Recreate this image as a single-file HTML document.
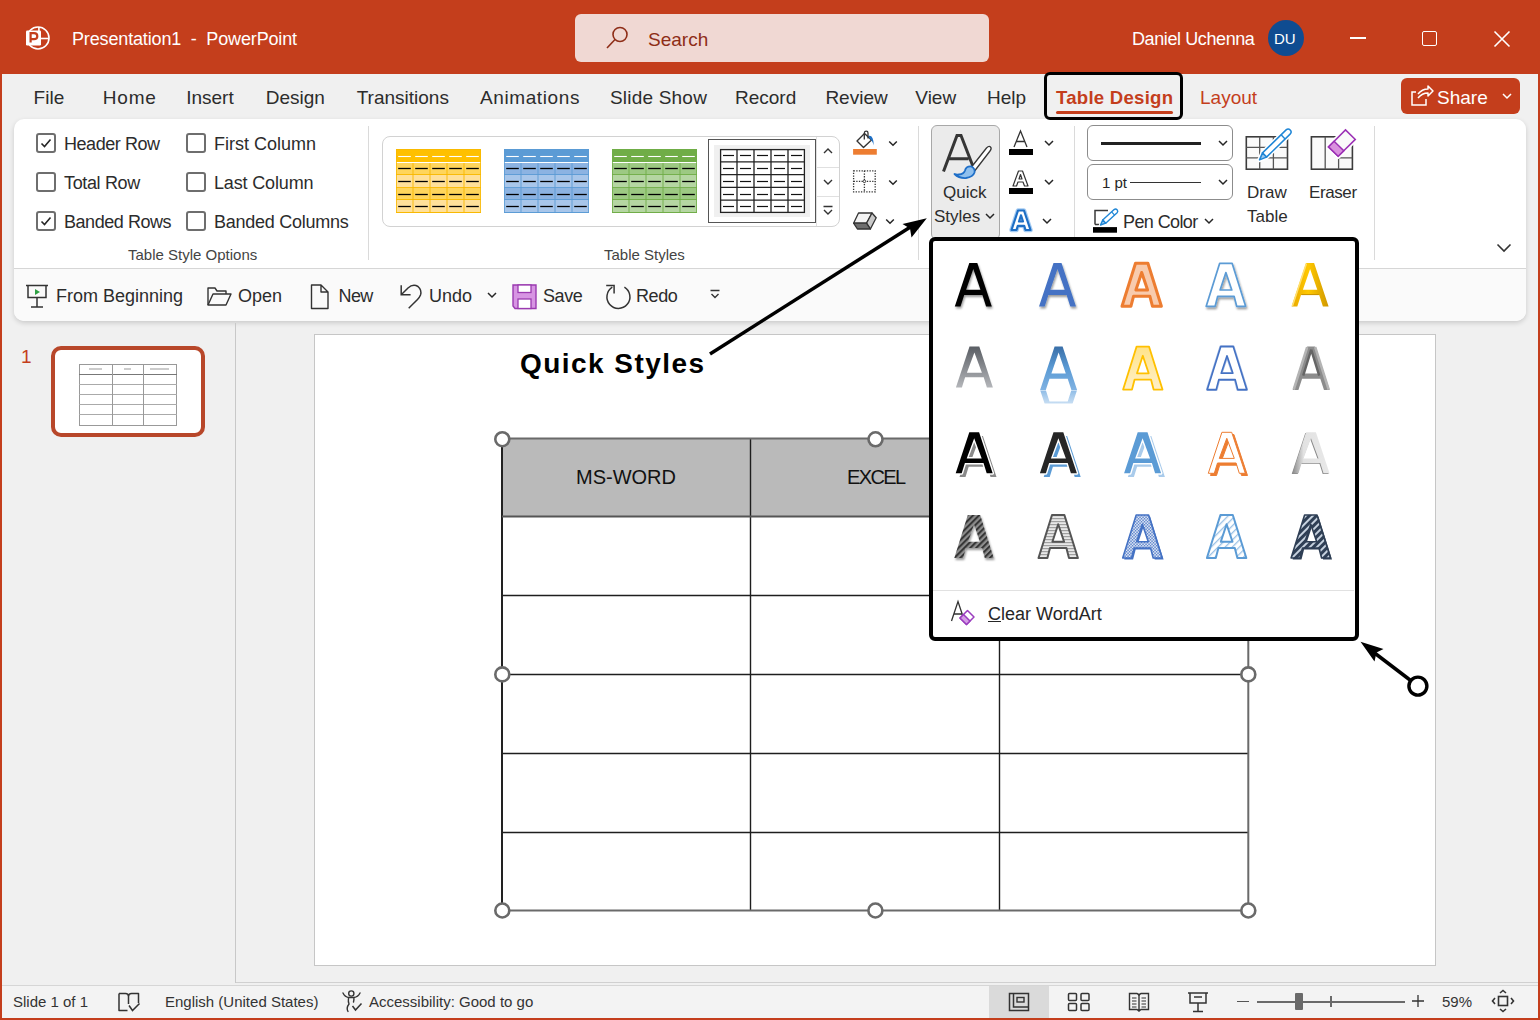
<!DOCTYPE html>
<html><head><meta charset="utf-8">
<style>
*{margin:0;padding:0;box-sizing:border-box}
html,body{width:1540px;height:1020px;overflow:hidden;background:#C43E1C;font-family:"Liberation Sans",sans-serif;color:#2c2c2c}
.a{position:absolute}
.t{position:absolute;white-space:nowrap;line-height:1}
svg{position:absolute;overflow:visible}
</style></head><body>
<!-- TITLE BAR -->
<div class="a" style="left:0;top:0;width:1540px;height:74px;background:#C43E1C"></div>
<svg style="left:20px;top:20px" width="36" height="36" viewBox="0 0 36 36">
  <circle cx="18" cy="18" r="11" fill="none" stroke="#fff" stroke-width="1.6"/>
  <line x1="18.9" y1="7" x2="18.9" y2="11" stroke="#fff" stroke-width="1.6"/>
  <line x1="20" y1="18.5" x2="29" y2="18.5" stroke="#fff" stroke-width="1.6"/>
  <rect x="6" y="10.6" width="15" height="14.8" rx="1.2" fill="#fff"/>
  <path d="M10.6 22.6 L10.6 13.2 L14 13.2 Q17.3 13.2 17.3 16.2 Q17.3 19.2 14 19.2 L10.6 19.2" fill="none" stroke="#C43E1C" stroke-width="2.2"/>
</svg>
<div class="t" style="left:72px;top:30px;font-size:18px;color:#fff;letter-spacing:-0.15px">Presentation1&nbsp; -&nbsp; PowerPoint</div>
<div class="a" style="left:575px;top:14px;width:414px;height:48px;background:#F0D8D3;border-radius:6px"></div>
<svg style="left:600px;top:24px" width="30" height="30" viewBox="0 0 30 30">
  <circle cx="20" cy="10.5" r="7" fill="none" stroke="#8E2D17" stroke-width="1.6"/>
  <line x1="15" y1="15.5" x2="7" y2="24" stroke="#8E2D17" stroke-width="1.6"/>
</svg>
<div class="t" style="left:648px;top:30px;font-size:19px;color:#8E2D17">Search</div>
<div class="t" style="left:1132px;top:30px;font-size:18px;color:#fff;letter-spacing:-0.4px">Daniel Uchenna</div>
<div class="a" style="left:1268px;top:20px;width:36px;height:36px;border-radius:50%;background:#0F4C91"></div>
<div class="t" style="left:1274px;top:31px;font-size:15px;color:#fff">DU</div>
<div class="a" style="left:1350px;top:37px;width:16px;height:1.5px;background:#fff"></div>
<div class="a" style="left:1422px;top:31px;width:15px;height:15px;border:1.5px solid #fff;border-radius:2px"></div>
<svg style="left:1494px;top:31px" width="16" height="16" viewBox="0 0 16 16"><path d="M0.5 0.5L15.5 15.5M15.5 0.5L0.5 15.5" stroke="#fff" stroke-width="1.6"/></svg>

<!-- MAIN BG -->
<div class="a" style="left:2px;top:74px;width:1536px;height:944px;background:#F0F0F0"></div>

<!-- TABS -->
<div class="t" style="left:33.6px;top:88px;font-size:19px">File</div>
<div class="t" style="left:102.8px;top:88px;font-size:19px;letter-spacing:0.8px">Home</div>
<div class="t" style="left:186.2px;top:88px;font-size:19px">Insert</div>
<div class="t" style="left:265.8px;top:88px;font-size:19px">Design</div>
<div class="t" style="left:356.7px;top:88px;font-size:19px">Transitions</div>
<div class="t" style="left:480.0px;top:88px;font-size:19px;letter-spacing:0.6px">Animations</div>
<div class="t" style="left:610.0px;top:88px;font-size:19px;letter-spacing:0.2px">Slide Show</div>
<div class="t" style="left:735.0px;top:88px;font-size:19px">Record</div>
<div class="t" style="left:825.4px;top:88px;font-size:19px">Review</div>
<div class="t" style="left:915.3px;top:88px;font-size:19px">View</div>
<div class="t" style="left:987.0px;top:88px;font-size:19px">Help</div>
<div class="a" style="left:1044px;top:72px;width:139px;height:48px;border:3.7px solid #000;border-radius:6px;z-index:5"></div>
<div class="t" style="left:1056px;top:89px;font-size:18.6px;font-weight:bold;color:#C43E1C;letter-spacing:0.25px">Table Design</div>
<div class="a" style="left:1056px;top:111px;width:117px;height:3px;background:#C43E1C;border-radius:1.5px"></div>
<div class="t" style="left:1200px;top:88px;font-size:19px;color:#C43E1C">Layout</div>
<div class="a" style="left:1401px;top:78px;width:119px;height:36px;background:#C43E1C;border-radius:6px"></div>
<svg style="left:1410px;top:86px" width="24" height="20" viewBox="0 0 24 20">
 <path d="M8 8 Q12 3 18 3 L18 0 L23 5 L18 10 L18 7 Q12 7 8 12" fill="none" stroke="#fff" stroke-width="1.5" stroke-linejoin="round"/>
 <path d="M6 6 L2 6 L2 19 L16 19 L16 13" fill="none" stroke="#fff" stroke-width="1.5"/>
</svg>
<div class="t" style="left:1437px;top:88px;font-size:19px;color:#fff">Share</div>
<svg style="left:1502px;top:93px" width="10" height="6" viewBox="0 0 10 6"><path d="M1 1L5 5L9 1" fill="none" stroke="#fff" stroke-width="1.5"/></svg>



<!-- RIBBON CARD -->
<div class="a" style="left:14px;top:119px;width:1512px;height:202px;background:#fff;border-radius:10px;box-shadow:0 2px 5px rgba(0,0,0,0.16)"></div>
<div class="a" style="left:14px;top:268px;width:1512px;height:53px;background:#FAFAFA;border-top:1px solid #D6D6D6;border-radius:0 0 10px 10px"></div>
<!-- group separators -->
<div class="a" style="left:368px;top:126px;width:1px;height:134px;background:#DADADA"></div>
<div class="a" style="left:918px;top:126px;width:1px;height:134px;background:#DADADA"></div>
<div class="a" style="left:1074px;top:126px;width:1px;height:134px;background:#DADADA"></div>
<div class="a" style="left:1374px;top:126px;width:1px;height:134px;background:#DADADA"></div>
<!-- checkboxes -->
<div class="a" style="left:36px;top:133px;width:20px;height:20px;border:2px solid #6E6E6E;border-radius:3px"></div>
<svg style="left:36px;top:133px" width="20" height="20" viewBox="0 0 20 20"><path d="M5.5 10.5L8.5 13.5L14.5 6.5" fill="none" stroke="#262626" stroke-width="1.6"/></svg>
<div class="t" style="left:64px;top:135px;font-size:18px;letter-spacing:-0.45px">Header Row</div>
<div class="a" style="left:36px;top:172px;width:20px;height:20px;border:2px solid #6E6E6E;border-radius:3px"></div>
<div class="t" style="left:64px;top:174px;font-size:18px;letter-spacing:-0.35px">Total Row</div>
<div class="a" style="left:36px;top:211px;width:20px;height:20px;border:2px solid #6E6E6E;border-radius:3px"></div>
<svg style="left:36px;top:211px" width="20" height="20" viewBox="0 0 20 20"><path d="M5.5 10.5L8.5 13.5L14.5 6.5" fill="none" stroke="#262626" stroke-width="1.6"/></svg>
<div class="t" style="left:64px;top:213px;font-size:18px;letter-spacing:-0.45px">Banded Rows</div>
<div class="a" style="left:186px;top:133px;width:20px;height:20px;border:2px solid #6E6E6E;border-radius:3px"></div>
<div class="t" style="left:214px;top:135px;font-size:18px;letter-spacing:0px">First Column</div>
<div class="a" style="left:186px;top:172px;width:20px;height:20px;border:2px solid #6E6E6E;border-radius:3px"></div>
<div class="t" style="left:214px;top:174px;font-size:18px;letter-spacing:-0.15px">Last Column</div>
<div class="a" style="left:186px;top:211px;width:20px;height:20px;border:2px solid #6E6E6E;border-radius:3px"></div>
<div class="t" style="left:214px;top:213px;font-size:18px;letter-spacing:-0.25px">Banded Columns</div>
<div class="t" style="left:128px;top:247px;font-size:15px;color:#444">Table Style Options</div>
<div class="t" style="left:604px;top:247px;font-size:15px;color:#444">Table Styles</div>
<!-- gallery -->
<div class="a" style="left:382px;top:136px;width:458px;height:91px;border:1px solid #D2D2D2;border-radius:8px"></div>
<div class="a" style="left:816px;top:137px;width:1px;height:89px;background:#E0E0E0"></div>
<div class="a" style="left:817px;top:167px;width:22px;height:1px;background:#E0E0E0"></div>
<div class="a" style="left:817px;top:196px;width:22px;height:1px;background:#E0E0E0"></div>
<svg style="left:822px;top:147px" width="12" height="8" viewBox="0 0 12 8"><path d="M2 6L6 2L10 6" fill="none" stroke="#333" stroke-width="1.4"/></svg>
<svg style="left:822px;top:178px" width="12" height="8" viewBox="0 0 12 8"><path d="M2 2L6 6L10 2" fill="none" stroke="#333" stroke-width="1.4"/></svg>
<svg style="left:822px;top:205px" width="12" height="12" viewBox="0 0 12 12"><path d="M1.5 1.5H10.5M2 5L6 9L10 5" fill="none" stroke="#333" stroke-width="1.4"/></svg>
<div class="a" style="left:708px;top:139px;width:108px;height:84px;border:1px solid #555;background:#fff"></div>
<div class="a" style="left:714px;top:145px;width:96px;height:72px;background:#F0F0F0"></div>
<svg style="left:396px;top:149px" width="85" height="64" viewBox="0 0 85 64"><rect x="0" y="0" width="85" height="13" fill="#FFC000"/><rect x="0" y="13" width="85" height="13" fill="#FFD55C"/><line x1="0" y1="25.5" x2="85" y2="25.5" stroke="#F8B800" stroke-width="0.9"/><rect x="0" y="26" width="85" height="13" fill="#FFE09A"/><line x1="0" y1="38.5" x2="85" y2="38.5" stroke="#F8B800" stroke-width="0.9"/><rect x="0" y="39" width="85" height="12" fill="#FFD55C"/><line x1="0" y1="50.5" x2="85" y2="50.5" stroke="#F8B800" stroke-width="0.9"/><rect x="0" y="51" width="85" height="13" fill="#FFE09A"/><line x1="0" y1="63.5" x2="85" y2="63.5" stroke="#F8B800" stroke-width="0.9"/><line x1="17.0" y1="13" x2="17.0" y2="64" stroke="#F8B800" stroke-width="0.9"/><line x1="34.0" y1="13" x2="34.0" y2="64" stroke="#F8B800" stroke-width="0.9"/><line x1="51.0" y1="13" x2="51.0" y2="64" stroke="#F8B800" stroke-width="0.9"/><line x1="68.0" y1="13" x2="68.0" y2="64" stroke="#F8B800" stroke-width="0.9"/><line x1="0" y1="13.5" x2="85" y2="13.5" stroke="#fff" stroke-width="1"/><line x1="2.2" y1="7.5" x2="14.8" y2="7.5" stroke="#fff" stroke-width="1.1"/><line x1="19.2" y1="7.5" x2="31.8" y2="7.5" stroke="#fff" stroke-width="1.1"/><line x1="36.2" y1="7.5" x2="48.8" y2="7.5" stroke="#fff" stroke-width="1.1"/><line x1="53.2" y1="7.5" x2="65.8" y2="7.5" stroke="#fff" stroke-width="1.1"/><line x1="70.2" y1="7.5" x2="82.8" y2="7.5" stroke="#fff" stroke-width="1.1"/><line x1="2.2" y1="19.5" x2="14.8" y2="19.5" stroke="#000" stroke-width="1.3"/><line x1="19.2" y1="19.5" x2="31.8" y2="19.5" stroke="#000" stroke-width="1.3"/><line x1="36.2" y1="19.5" x2="48.8" y2="19.5" stroke="#000" stroke-width="1.3"/><line x1="53.2" y1="19.5" x2="65.8" y2="19.5" stroke="#000" stroke-width="1.3"/><line x1="70.2" y1="19.5" x2="82.8" y2="19.5" stroke="#000" stroke-width="1.3"/><line x1="2.2" y1="32.5" x2="14.8" y2="32.5" stroke="#000" stroke-width="1.3"/><line x1="19.2" y1="32.5" x2="31.8" y2="32.5" stroke="#000" stroke-width="1.3"/><line x1="36.2" y1="32.5" x2="48.8" y2="32.5" stroke="#000" stroke-width="1.3"/><line x1="53.2" y1="32.5" x2="65.8" y2="32.5" stroke="#000" stroke-width="1.3"/><line x1="70.2" y1="32.5" x2="82.8" y2="32.5" stroke="#000" stroke-width="1.3"/><line x1="2.2" y1="45.5" x2="14.8" y2="45.5" stroke="#000" stroke-width="1.3"/><line x1="19.2" y1="45.5" x2="31.8" y2="45.5" stroke="#000" stroke-width="1.3"/><line x1="36.2" y1="45.5" x2="48.8" y2="45.5" stroke="#000" stroke-width="1.3"/><line x1="53.2" y1="45.5" x2="65.8" y2="45.5" stroke="#000" stroke-width="1.3"/><line x1="70.2" y1="45.5" x2="82.8" y2="45.5" stroke="#000" stroke-width="1.3"/><line x1="2.2" y1="57.5" x2="14.8" y2="57.5" stroke="#000" stroke-width="1.3"/><line x1="19.2" y1="57.5" x2="31.8" y2="57.5" stroke="#000" stroke-width="1.3"/><line x1="36.2" y1="57.5" x2="48.8" y2="57.5" stroke="#000" stroke-width="1.3"/><line x1="53.2" y1="57.5" x2="65.8" y2="57.5" stroke="#000" stroke-width="1.3"/><line x1="70.2" y1="57.5" x2="82.8" y2="57.5" stroke="#000" stroke-width="1.3"/><rect x="0.4" y="0.4" width="84.2" height="63.2" fill="none" stroke="#F8B800" stroke-width="0.8"/></svg>
<svg style="left:504px;top:149px" width="85" height="64" viewBox="0 0 85 64"><rect x="0" y="0" width="85" height="13" fill="#5B9BD5"/><rect x="0" y="13" width="85" height="13" fill="#8CB3E2"/><line x1="0" y1="25.5" x2="85" y2="25.5" stroke="#5B9BD5" stroke-width="0.9"/><rect x="0" y="26" width="85" height="13" fill="#A8C6EA"/><line x1="0" y1="38.5" x2="85" y2="38.5" stroke="#5B9BD5" stroke-width="0.9"/><rect x="0" y="39" width="85" height="12" fill="#8CB3E2"/><line x1="0" y1="50.5" x2="85" y2="50.5" stroke="#5B9BD5" stroke-width="0.9"/><rect x="0" y="51" width="85" height="13" fill="#A8C6EA"/><line x1="0" y1="63.5" x2="85" y2="63.5" stroke="#5B9BD5" stroke-width="0.9"/><line x1="17.0" y1="13" x2="17.0" y2="64" stroke="#5B9BD5" stroke-width="0.9"/><line x1="34.0" y1="13" x2="34.0" y2="64" stroke="#5B9BD5" stroke-width="0.9"/><line x1="51.0" y1="13" x2="51.0" y2="64" stroke="#5B9BD5" stroke-width="0.9"/><line x1="68.0" y1="13" x2="68.0" y2="64" stroke="#5B9BD5" stroke-width="0.9"/><line x1="0" y1="13.5" x2="85" y2="13.5" stroke="#fff" stroke-width="1"/><line x1="2.2" y1="7.5" x2="14.8" y2="7.5" stroke="#fff" stroke-width="1.1"/><line x1="19.2" y1="7.5" x2="31.8" y2="7.5" stroke="#fff" stroke-width="1.1"/><line x1="36.2" y1="7.5" x2="48.8" y2="7.5" stroke="#fff" stroke-width="1.1"/><line x1="53.2" y1="7.5" x2="65.8" y2="7.5" stroke="#fff" stroke-width="1.1"/><line x1="70.2" y1="7.5" x2="82.8" y2="7.5" stroke="#fff" stroke-width="1.1"/><line x1="2.2" y1="19.5" x2="14.8" y2="19.5" stroke="#000" stroke-width="1.3"/><line x1="19.2" y1="19.5" x2="31.8" y2="19.5" stroke="#000" stroke-width="1.3"/><line x1="36.2" y1="19.5" x2="48.8" y2="19.5" stroke="#000" stroke-width="1.3"/><line x1="53.2" y1="19.5" x2="65.8" y2="19.5" stroke="#000" stroke-width="1.3"/><line x1="70.2" y1="19.5" x2="82.8" y2="19.5" stroke="#000" stroke-width="1.3"/><line x1="2.2" y1="32.5" x2="14.8" y2="32.5" stroke="#000" stroke-width="1.3"/><line x1="19.2" y1="32.5" x2="31.8" y2="32.5" stroke="#000" stroke-width="1.3"/><line x1="36.2" y1="32.5" x2="48.8" y2="32.5" stroke="#000" stroke-width="1.3"/><line x1="53.2" y1="32.5" x2="65.8" y2="32.5" stroke="#000" stroke-width="1.3"/><line x1="70.2" y1="32.5" x2="82.8" y2="32.5" stroke="#000" stroke-width="1.3"/><line x1="2.2" y1="45.5" x2="14.8" y2="45.5" stroke="#000" stroke-width="1.3"/><line x1="19.2" y1="45.5" x2="31.8" y2="45.5" stroke="#000" stroke-width="1.3"/><line x1="36.2" y1="45.5" x2="48.8" y2="45.5" stroke="#000" stroke-width="1.3"/><line x1="53.2" y1="45.5" x2="65.8" y2="45.5" stroke="#000" stroke-width="1.3"/><line x1="70.2" y1="45.5" x2="82.8" y2="45.5" stroke="#000" stroke-width="1.3"/><line x1="2.2" y1="57.5" x2="14.8" y2="57.5" stroke="#000" stroke-width="1.3"/><line x1="19.2" y1="57.5" x2="31.8" y2="57.5" stroke="#000" stroke-width="1.3"/><line x1="36.2" y1="57.5" x2="48.8" y2="57.5" stroke="#000" stroke-width="1.3"/><line x1="53.2" y1="57.5" x2="65.8" y2="57.5" stroke="#000" stroke-width="1.3"/><line x1="70.2" y1="57.5" x2="82.8" y2="57.5" stroke="#000" stroke-width="1.3"/><rect x="0.4" y="0.4" width="84.2" height="63.2" fill="none" stroke="#5B9BD5" stroke-width="0.8"/></svg>
<svg style="left:612px;top:149px" width="85" height="64" viewBox="0 0 85 64"><rect x="0" y="0" width="85" height="13" fill="#70AD47"/><rect x="0" y="13" width="85" height="13" fill="#9DC983"/><line x1="0" y1="25.5" x2="85" y2="25.5" stroke="#70AD47" stroke-width="0.9"/><rect x="0" y="26" width="85" height="13" fill="#B5D6A2"/><line x1="0" y1="38.5" x2="85" y2="38.5" stroke="#70AD47" stroke-width="0.9"/><rect x="0" y="39" width="85" height="12" fill="#9DC983"/><line x1="0" y1="50.5" x2="85" y2="50.5" stroke="#70AD47" stroke-width="0.9"/><rect x="0" y="51" width="85" height="13" fill="#B5D6A2"/><line x1="0" y1="63.5" x2="85" y2="63.5" stroke="#70AD47" stroke-width="0.9"/><line x1="17.0" y1="13" x2="17.0" y2="64" stroke="#70AD47" stroke-width="0.9"/><line x1="34.0" y1="13" x2="34.0" y2="64" stroke="#70AD47" stroke-width="0.9"/><line x1="51.0" y1="13" x2="51.0" y2="64" stroke="#70AD47" stroke-width="0.9"/><line x1="68.0" y1="13" x2="68.0" y2="64" stroke="#70AD47" stroke-width="0.9"/><line x1="0" y1="13.5" x2="85" y2="13.5" stroke="#fff" stroke-width="1"/><line x1="2.2" y1="7.5" x2="14.8" y2="7.5" stroke="#fff" stroke-width="1.1"/><line x1="19.2" y1="7.5" x2="31.8" y2="7.5" stroke="#fff" stroke-width="1.1"/><line x1="36.2" y1="7.5" x2="48.8" y2="7.5" stroke="#fff" stroke-width="1.1"/><line x1="53.2" y1="7.5" x2="65.8" y2="7.5" stroke="#fff" stroke-width="1.1"/><line x1="70.2" y1="7.5" x2="82.8" y2="7.5" stroke="#fff" stroke-width="1.1"/><line x1="2.2" y1="19.5" x2="14.8" y2="19.5" stroke="#000" stroke-width="1.3"/><line x1="19.2" y1="19.5" x2="31.8" y2="19.5" stroke="#000" stroke-width="1.3"/><line x1="36.2" y1="19.5" x2="48.8" y2="19.5" stroke="#000" stroke-width="1.3"/><line x1="53.2" y1="19.5" x2="65.8" y2="19.5" stroke="#000" stroke-width="1.3"/><line x1="70.2" y1="19.5" x2="82.8" y2="19.5" stroke="#000" stroke-width="1.3"/><line x1="2.2" y1="32.5" x2="14.8" y2="32.5" stroke="#000" stroke-width="1.3"/><line x1="19.2" y1="32.5" x2="31.8" y2="32.5" stroke="#000" stroke-width="1.3"/><line x1="36.2" y1="32.5" x2="48.8" y2="32.5" stroke="#000" stroke-width="1.3"/><line x1="53.2" y1="32.5" x2="65.8" y2="32.5" stroke="#000" stroke-width="1.3"/><line x1="70.2" y1="32.5" x2="82.8" y2="32.5" stroke="#000" stroke-width="1.3"/><line x1="2.2" y1="45.5" x2="14.8" y2="45.5" stroke="#000" stroke-width="1.3"/><line x1="19.2" y1="45.5" x2="31.8" y2="45.5" stroke="#000" stroke-width="1.3"/><line x1="36.2" y1="45.5" x2="48.8" y2="45.5" stroke="#000" stroke-width="1.3"/><line x1="53.2" y1="45.5" x2="65.8" y2="45.5" stroke="#000" stroke-width="1.3"/><line x1="70.2" y1="45.5" x2="82.8" y2="45.5" stroke="#000" stroke-width="1.3"/><line x1="2.2" y1="57.5" x2="14.8" y2="57.5" stroke="#000" stroke-width="1.3"/><line x1="19.2" y1="57.5" x2="31.8" y2="57.5" stroke="#000" stroke-width="1.3"/><line x1="36.2" y1="57.5" x2="48.8" y2="57.5" stroke="#000" stroke-width="1.3"/><line x1="53.2" y1="57.5" x2="65.8" y2="57.5" stroke="#000" stroke-width="1.3"/><line x1="70.2" y1="57.5" x2="82.8" y2="57.5" stroke="#000" stroke-width="1.3"/><rect x="0.4" y="0.4" width="84.2" height="63.2" fill="none" stroke="#70AD47" stroke-width="0.8"/></svg>
<svg style="left:720px;top:149px" width="85" height="64" viewBox="0 0 85 64"><rect x="0.6" y="0.6" width="83.8" height="62.8" fill="#fff" stroke="#222" stroke-width="1.3"/><line x1="0" y1="12.8" x2="85" y2="12.8" stroke="#222" stroke-width="1.3"/><line x1="0" y1="25.6" x2="85" y2="25.6" stroke="#222" stroke-width="1.3"/><line x1="0" y1="38.4" x2="85" y2="38.4" stroke="#222" stroke-width="1.3"/><line x1="0" y1="51.2" x2="85" y2="51.2" stroke="#222" stroke-width="1.3"/><line x1="17.0" y1="0" x2="17.0" y2="64" stroke="#222" stroke-width="1.3"/><line x1="34.0" y1="0" x2="34.0" y2="64" stroke="#222" stroke-width="1.3"/><line x1="51.0" y1="0" x2="51.0" y2="64" stroke="#222" stroke-width="1.3"/><line x1="68.0" y1="0" x2="68.0" y2="64" stroke="#222" stroke-width="1.3"/><line x1="3.0" y1="6.5" x2="14.0" y2="6.5" stroke="#111" stroke-width="1.2"/><line x1="20.0" y1="6.5" x2="31.0" y2="6.5" stroke="#111" stroke-width="1.2"/><line x1="37.0" y1="6.5" x2="48.0" y2="6.5" stroke="#111" stroke-width="1.2"/><line x1="54.0" y1="6.5" x2="65.0" y2="6.5" stroke="#111" stroke-width="1.2"/><line x1="71.0" y1="6.5" x2="82.0" y2="6.5" stroke="#111" stroke-width="1.2"/><line x1="3.0" y1="19.5" x2="14.0" y2="19.5" stroke="#111" stroke-width="1.2"/><line x1="20.0" y1="19.5" x2="31.0" y2="19.5" stroke="#111" stroke-width="1.2"/><line x1="37.0" y1="19.5" x2="48.0" y2="19.5" stroke="#111" stroke-width="1.2"/><line x1="54.0" y1="19.5" x2="65.0" y2="19.5" stroke="#111" stroke-width="1.2"/><line x1="71.0" y1="19.5" x2="82.0" y2="19.5" stroke="#111" stroke-width="1.2"/><line x1="3.0" y1="32.5" x2="14.0" y2="32.5" stroke="#111" stroke-width="1.2"/><line x1="20.0" y1="32.5" x2="31.0" y2="32.5" stroke="#111" stroke-width="1.2"/><line x1="37.0" y1="32.5" x2="48.0" y2="32.5" stroke="#111" stroke-width="1.2"/><line x1="54.0" y1="32.5" x2="65.0" y2="32.5" stroke="#111" stroke-width="1.2"/><line x1="71.0" y1="32.5" x2="82.0" y2="32.5" stroke="#111" stroke-width="1.2"/><line x1="3.0" y1="45.5" x2="14.0" y2="45.5" stroke="#111" stroke-width="1.2"/><line x1="20.0" y1="45.5" x2="31.0" y2="45.5" stroke="#111" stroke-width="1.2"/><line x1="37.0" y1="45.5" x2="48.0" y2="45.5" stroke="#111" stroke-width="1.2"/><line x1="54.0" y1="45.5" x2="65.0" y2="45.5" stroke="#111" stroke-width="1.2"/><line x1="71.0" y1="45.5" x2="82.0" y2="45.5" stroke="#111" stroke-width="1.2"/><line x1="3.0" y1="57.5" x2="14.0" y2="57.5" stroke="#111" stroke-width="1.2"/><line x1="20.0" y1="57.5" x2="31.0" y2="57.5" stroke="#111" stroke-width="1.2"/><line x1="37.0" y1="57.5" x2="48.0" y2="57.5" stroke="#111" stroke-width="1.2"/><line x1="54.0" y1="57.5" x2="65.0" y2="57.5" stroke="#111" stroke-width="1.2"/><line x1="71.0" y1="57.5" x2="82.0" y2="57.5" stroke="#111" stroke-width="1.2"/></svg>
<!-- shading/borders/eraser -->
<svg style="left:845px;top:125px" width="60" height="110" viewBox="0 0 60 110">
 <path d="M12,16 L19.5,8.5 L26.5,15 L18.5,22.5 Z" fill="#fff" stroke="#333" stroke-width="1.4" stroke-linejoin="round"/>
 <path d="M19.3,14.5 L19.3,8 Q19.5,6.2 21.2,6.2 Q23,6.2 23,8 L23,13.5" fill="none" stroke="#333" stroke-width="1.3"/>
 <path d="M23.5,10.8 Q28.5,9.5 28.8,20.5 Q27.5,15.5 24.5,13.5 Z" fill="#1E6FC5"/>
 <rect x="8.1" y="24" width="23.7" height="5.7" fill="#ED7D31"/>
 <rect x="8.6" y="45.8" width="21.6" height="21.1" fill="none" stroke="#333" stroke-width="1.3" stroke-dasharray="1.3 1.35"/>
 <line x1="19.4" y1="45.8" x2="19.4" y2="66.9" stroke="#333" stroke-width="1.3" stroke-dasharray="1.3 1.35"/>
 <line x1="8.6" y1="56.35" x2="30.2" y2="56.35" stroke="#333" stroke-width="1.3" stroke-dasharray="1.3 1.35"/>
 <circle cx="19.4" cy="56.35" r="1.3" fill="#fff" stroke="#333" stroke-width="0.9"/>
 <path d="M8.6,98.2 L13.5,88 L27,88 L21.5,98.2 Z" fill="#F4F4F4" stroke="#333" stroke-width="1.3" stroke-linejoin="round"/>
 <path d="M21.5,98.2 L27,88 L31.2,92.8 L25.4,104 Z" fill="#C9C9C9" stroke="#333" stroke-width="1.3" stroke-linejoin="round"/>
 <path d="M8.6,98.2 L21.5,98.2 L25.4,104 L12.4,104 Z" fill="#6E6E6E" stroke="#333" stroke-width="1.3" stroke-linejoin="round"/>
 <path d="M44.2,16.5 L48,20.3 L51.8,16.5" fill="none" stroke="#262626" stroke-width="1.5"/>
 <path d="M44.2,55.5 L48,59.3 L51.8,55.5" fill="none" stroke="#262626" stroke-width="1.5"/>
 <path d="M41.2,94.5 L45,98.3 L48.8,94.5" fill="none" stroke="#262626" stroke-width="1.5"/>
</svg>
<div class="a" style="left:931px;top:125px;width:69px;height:115px;background:#EBEBEB;border:1px solid #A8A8A8;border-radius:6px"></div>
<svg style="left:930px;top:125px" width="70" height="60" viewBox="0 0 70 60">
 <path d="M13.5 46.5 L27 10.5 L31 10.5 L44 44 M19.5 33.8 L38.5 33.8" fill="none" stroke="#363636" stroke-width="3" stroke-linejoin="miter"/>
 <path d="M41.5 42 L56.5 23 Q59 20.5 60.5 22 Q62 23.5 60 26 L45 45.5 Z" fill="#fff" stroke="#363636" stroke-width="1.3" stroke-linejoin="round"/>
 <path d="M41.5 41.5 Q36 41 35 45.5 Q34 49 29 49.5 Q26 49.8 24.5 49 Q29 53.5 36 53 Q43 52 44.5 47.5 Q45.5 44 41.5 41.5 Z" fill="#8FC0EE" stroke="#1F6FC8" stroke-width="1.8" stroke-linejoin="round"/>
</svg>
<div class="t" style="left:943px;top:184px;font-size:17px">Quick</div>
<div class="t" style="left:934px;top:208px;font-size:17px">Styles</div>
<svg style="left:985px;top:213px" width="10" height="6" viewBox="0 0 10 6"><path d="M1 1L5 5L9 1" fill="none" stroke="#262626" stroke-width="1.5"/></svg>
<svg style="left:1008px;top:129px" width="26" height="28" viewBox="0 0 26 28">
 <path d="M6 18 L12.5 2 L19 18 M8.2 12.5 L16.8 12.5" fill="none" stroke="#333" stroke-width="1.3"/>
 <rect x="1" y="20" width="24" height="6" fill="#000"/>
</svg>
<svg style="left:1044px;top:140px" width="10" height="6" viewBox="0 0 10 6"><path d="M1 1L5 5L9 1" fill="none" stroke="#262626" stroke-width="1.5"/></svg>
<svg style="left:1008px;top:168px" width="26" height="28" viewBox="0 0 26 28">
 <path d="M5 18 L10.5 3 L14.5 3 L20 18 L16.5 18 L15 14 L10 14 L8.5 18 Z M11 11 L14 11 L12.5 6.5 Z" fill="#fff" stroke="#333" stroke-width="1.2" stroke-linejoin="round"/>
 <rect x="1" y="20" width="24" height="6" fill="#000"/>
</svg>
<svg style="left:1044px;top:179px" width="10" height="6" viewBox="0 0 10 6"><path d="M1 1L5 5L9 1" fill="none" stroke="#262626" stroke-width="1.5"/></svg>
<svg style="left:1008px;top:207px" width="26" height="26" viewBox="0 0 26 26">
 <path d="M3.5 23 L10 3.5 L16 3.5 L22.5 23 L17.5 23 L16.2 18.8 L9.8 18.8 L8.5 23 Z M11 14.5 L15 14.5 L13 8.3 Z" fill="none" stroke="#A7CDF3" stroke-width="4.5" stroke-linejoin="round"/>
 <path d="M3.5 23 L10 3.5 L16 3.5 L22.5 23 L17.5 23 L16.2 18.8 L9.8 18.8 L8.5 23 Z M11 14.5 L15 14.5 L13 8.3 Z" fill="#fff" stroke="#1E6FC5" stroke-width="2.2" stroke-linejoin="round" fill-rule="evenodd"/>
</svg>
<svg style="left:1042px;top:218px" width="10" height="6" viewBox="0 0 10 6"><path d="M1 1L5 5L9 1" fill="none" stroke="#262626" stroke-width="1.5"/></svg>
<div class="a" style="left:1087px;top:125px;width:146px;height:36px;border:1px solid #8C8C8C;border-radius:6px;background:#fff"></div>
<div class="a" style="left:1101px;top:142px;width:100px;height:2.5px;background:#222"></div>
<svg style="left:1218px;top:140px" width="10" height="6" viewBox="0 0 10 6"><path d="M1 1L5 5L9 1" fill="none" stroke="#262626" stroke-width="1.5"/></svg>
<div class="a" style="left:1087px;top:164px;width:146px;height:36px;border:1px solid #8C8C8C;border-radius:6px;background:#fff"></div>
<div class="t" style="left:1102px;top:175px;font-size:15px;color:#262626">1 pt</div>
<div class="a" style="left:1130px;top:182px;width:71px;height:1px;background:#333"></div>
<svg style="left:1218px;top:179px" width="10" height="6" viewBox="0 0 10 6"><path d="M1 1L5 5L9 1" fill="none" stroke="#262626" stroke-width="1.5"/></svg>
<svg style="left:1085px;top:200px" width="36" height="36" viewBox="0 0 36 36">
 <path d="M10,24.5 L10,10.5 L23,10.5 M10,24.5 L14.5,24.5" fill="none" stroke="#3A3A3A" stroke-width="1.5"/>
 <path d="M17.7,20.0 L29.1,9.6 A2.2,2.2 0 0 1 32.1,12.8 L20.7,23.2 L15.5,25 Z" fill="#fff" stroke="#fff" stroke-width="3"/>
 <path d="M17.7,20.0 L29.1,9.6 A2.2,2.2 0 0 1 32.1,12.8 L20.7,23.2 Z" fill="#fff" stroke="#1F86D6" stroke-width="1.4" stroke-linejoin="round"/>
 <path d="M17.7,20 L15.5,25 L20.7,23.2 Z" fill="#9CCAF0" stroke="#1F86D6" stroke-width="1.4" stroke-linejoin="round"/>
 <path d="M26.6,11.9 L29.6,15.1" stroke="#1F86D6" stroke-width="1.2"/>
 <rect x="8" y="27.1" width="24" height="5.6" fill="#000"/>
</svg>
<div class="t" style="left:1123px;top:213px;font-size:18px;letter-spacing:-0.6px">Pen Color</div>
<svg style="left:1204px;top:218px" width="10" height="6" viewBox="0 0 10 6"><path d="M1 1L5 5L9 1" fill="none" stroke="#262626" stroke-width="1.5"/></svg>

<svg style="left:1240px;top:125px" width="120" height="50" viewBox="0 0 120 50">
 <rect x="6.3" y="11.8" width="41.2" height="32.4" fill="#FAFAFA" stroke="#3C3C3C" stroke-width="1.6"/>
 <path d="M6.3,22.3 H47.5 M6.3,32.9 H47.5 M19.7,11.8 V44.2 M33.4,11.8 V44.2" stroke="#555" stroke-width="1.3"/>
 <path d="M22.5,27.9 L46.1,4.9 A2.9,2.9 0 0 1 50.1,9.1 L26.5,32.1 L19.5,34.9 Z" fill="#fff" stroke="#fff" stroke-width="4.5" stroke-linejoin="round"/>
 <path d="M22.5,27.9 L46.1,4.9 A2.9,2.9 0 0 1 50.1,9.1 L26.5,32.1 Z" fill="#fff" stroke="#1F86D6" stroke-width="1.5" stroke-linejoin="round"/>
 <path d="M22.5,27.9 L19.5,34.9 L26.5,32.1 Z" fill="#9CCAF0" stroke="#1F86D6" stroke-width="1.5" stroke-linejoin="round"/>
 <path d="M41.1,9.8 L45.1,14.0" stroke="#1F86D6" stroke-width="1.4"/>
 <rect x="71.4" y="11.8" width="41" height="32.4" fill="#FAFAFA" stroke="#3C3C3C" stroke-width="1.6"/>
 <path d="M85.2,11.8 V44.2 M98.6,32.9 V44.2 M98.6,32.9 H112.4" stroke="#555" stroke-width="1.3"/>
 <path d="M105.5,4.9 L115.3,14.4 L98.2,31.3 L88.5,21.9 Z" fill="#fff" stroke="#fff" stroke-width="5" stroke-linejoin="round"/>
 <path d="M105.5,4.9 L115.3,14.4 L98.2,31.3 L88.5,21.9 Z" fill="#FAFAFA" stroke="#9B30B5" stroke-width="1.5" stroke-linejoin="miter"/>
 <path d="M88.5,21.9 L94.1,16.3 L103.8,25.7 L98.2,31.3 Z" fill="#D990DE" stroke="#9B30B5" stroke-width="1.5" stroke-linejoin="miter"/>
</svg>
<div class="t" style="left:1247px;top:184px;font-size:17px">Draw</div>
<div class="t" style="left:1247px;top:208px;font-size:17px">Table</div>

<div class="t" style="left:1309px;top:184px;font-size:17px;letter-spacing:-0.4px">Eraser</div>
<svg style="left:1496px;top:243px" width="16" height="10" viewBox="0 0 16 10"><path d="M1.5 1.5L8 8L14.5 1.5" fill="none" stroke="#333" stroke-width="1.6"/></svg>
<!-- QAT -->
<svg style="left:25px;top:284px" width="26" height="26" viewBox="0 0 26 26">
 <path d="M1 1.5 L23 1.5 M3 1.5 L3 13.5 L21 13.5 L21 1.5 M12 13.5 L12 22.5 M6 23 L18 23" fill="none" stroke="#333" stroke-width="1.5"/>
 <path d="M10 5 L10 11 L15 8 Z" fill="#2EA043"/>
</svg>
<div class="t" style="left:56px;top:287px;font-size:18px">From Beginning</div>
<svg style="left:207px;top:285px" width="26" height="22" viewBox="0 0 26 22">
 <path d="M1 20 L1 3 L8 3 L10 6 L19 6 L19 9" fill="none" stroke="#333" stroke-width="1.4" stroke-linejoin="round"/>
 <path d="M1 20 L6 9 L24 9 L19 20 Z" fill="none" stroke="#333" stroke-width="1.4" stroke-linejoin="round"/>
</svg>
<div class="t" style="left:238px;top:287px;font-size:18px">Open</div>
<svg style="left:310px;top:284px" width="20" height="26" viewBox="0 0 20 26">
 <path d="M1.5 1 L11 1 L18 8 L18 24.5 L1.5 24.5 Z M11 1 L11 8 L18 8" fill="none" stroke="#333" stroke-width="1.4" stroke-linejoin="round"/>
</svg>
<div class="t" style="left:338.5px;top:287px;font-size:18px;letter-spacing:-0.6px">New</div>
<svg style="left:395px;top:278px" width="32" height="34" viewBox="0 0 32 34">
 <path d="M6.2,7.2 L6.2,16.8 L15.6,16.8 M6.2,16.8 L13,10 Q18,5.5 23,8.5 Q27,12 25.5,17 Q24.5,19.5 22.5,21.5 L13.7,30.2" fill="none" stroke="#333" stroke-width="1.5" stroke-linejoin="miter"/>
</svg>
<div class="t" style="left:429px;top:287px;font-size:18px">Undo</div>
<svg style="left:487px;top:292px" width="10" height="6" viewBox="0 0 10 6"><path d="M1 1L5 5L9 1" fill="none" stroke="#262626" stroke-width="1.5"/></svg>
<svg style="left:512px;top:284px" width="26" height="26" viewBox="0 0 26 26">
 <path d="M1 1 L24 1 L24 24.5 L3 24.5 L1 22 Z" fill="#D795E3" stroke="#9A3AB0" stroke-width="1.4"/>
 <rect x="6" y="1" width="13" height="7.5" fill="#fff" stroke="#9A3AB0" stroke-width="1.3"/>
 <rect x="6" y="15" width="13" height="9.5" fill="#fff" stroke="#9A3AB0" stroke-width="1.3"/>
</svg>
<div class="t" style="left:543px;top:287px;font-size:18px;letter-spacing:-0.4px">Save</div>
<svg style="left:600px;top:278px" width="34" height="34" viewBox="0 0 34 34">
 <path d="M24.4,9.1 A11.5,11.5 0 1 1 12.3,9.2 M6.2,7.4 L14.1,7.4 L14.1,15.6" fill="none" stroke="#333" stroke-width="1.5"/>
</svg>
<div class="t" style="left:636px;top:287px;font-size:18px;letter-spacing:-0.4px">Redo</div>
<svg style="left:709px;top:289px" width="12" height="12" viewBox="0 0 12 12"><path d="M1.5 1.5H10.5M2.5 5L6 8.5L9.5 5" fill="none" stroke="#333" stroke-width="1.4"/></svg>

<!-- SLIDE PANEL -->
<div class="a" style="left:235px;top:323px;width:1px;height:660px;background:#C8C8C8"></div>
<div class="t" style="left:21px;top:347px;font-size:19px;color:#C43E1C">1</div>
<div class="a" style="left:51px;top:346px;width:154px;height:91px;border:4px solid #B8472A;border-radius:10px;background:#fff"></div>
<svg style="left:79px;top:364px" width="98" height="62" viewBox="0 0 98 62">
 <rect x="0.5" y="0.5" width="97" height="61" fill="#fff" stroke="#999" stroke-width="1"/>
 <line x1="0" y1="10.5" x2="98" y2="10.5" stroke="#777" stroke-width="1"/>
 <line x1="0" y1="20.5" x2="98" y2="20.5" stroke="#aaa" stroke-width="1"/>
 <line x1="0" y1="30.5" x2="98" y2="30.5" stroke="#aaa" stroke-width="1"/>
 <line x1="0" y1="40.5" x2="98" y2="40.5" stroke="#aaa" stroke-width="1"/>
 <line x1="0" y1="50.5" x2="98" y2="50.5" stroke="#aaa" stroke-width="1"/>
 <line x1="33.5" y1="0" x2="33.5" y2="62" stroke="#999" stroke-width="1"/>
 <line x1="64.5" y1="0" x2="64.5" y2="62" stroke="#999" stroke-width="1"/>
 <line x1="10" y1="5" x2="23" y2="5" stroke="#999" stroke-width="1"/>
 <line x1="45" y1="5" x2="52" y2="5" stroke="#999" stroke-width="1"/>
 <line x1="71" y1="5" x2="90" y2="5" stroke="#999" stroke-width="1"/>
</svg>

<!-- SLIDE -->
<div class="a" style="left:314px;top:334px;width:1122px;height:632px;background:#fff;border:1px solid #C6C6C6"></div>
<div class="a" style="left:236px;top:982px;width:1302px;height:1px;background:#D0D0D0"></div>
<!-- table -->
<div class="a" style="left:502px;top:438px;width:746px;height:78px;background:#BABABA"></div>
<svg style="left:0;top:0" width="1540" height="1020" viewBox="0 0 1540 1020">
 <g stroke="#1E1E1E" stroke-width="1.4">
  <line x1="502" y1="595.5" x2="1248" y2="595.5"/>
  <line x1="502" y1="674.5" x2="1248" y2="674.5"/>
  <line x1="502" y1="753.5" x2="1248" y2="753.5"/>
  <line x1="502" y1="832.5" x2="1248" y2="832.5"/>
  <line x1="750.5" y1="438" x2="750.5" y2="910"/>
  <line x1="999.5" y1="438" x2="999.5" y2="910"/>
 </g>
 <line x1="502" y1="438" x2="502" y2="910" stroke="#222" stroke-width="2"/>
 <g stroke="#6A6A6A" stroke-width="2">
  <line x1="502" y1="438.5" x2="1248" y2="438.5"/>
  <line x1="502" y1="910.5" x2="1248" y2="910.5"/>
  <line x1="1248.3" y1="438" x2="1248.3" y2="910"/>
 </g>
 <line x1="502" y1="516.5" x2="1248" y2="516.5" stroke="#555" stroke-width="1.8"/>
 <g fill="#fff" stroke="#6A6A6A" stroke-width="2.6">
  <circle cx="502.3" cy="439.2" r="7"/>
  <circle cx="875.5" cy="439.3" r="7"/>
  <circle cx="502.3" cy="674.4" r="7"/>
  <circle cx="1248.3" cy="674.4" r="7"/>
  <circle cx="502.3" cy="910.5" r="7"/>
  <circle cx="875.4" cy="910.5" r="7"/>
  <circle cx="1248.3" cy="910.5" r="7"/>
 </g>
 <!-- annotation arrows -->
 <line x1="710" y1="354" x2="912" y2="226" stroke="#000" stroke-width="3.5"/>
 <path d="M926.8 218.2 L902.5 224 L910 228.5 L911.5 237.5 Z" fill="#000"/>
 <line x1="1410" y1="680" x2="1372" y2="651" stroke="#000" stroke-width="3.5"/>
 <path d="M1360.5 641.7 L1383.5 649 L1376.5 652.5 L1374.5 661.5 Z" fill="#000"/>
 <circle cx="1417.9" cy="686.1" r="9" fill="#fff" stroke="#000" stroke-width="3.4"/>
</svg>
<div class="t" style="left:576px;top:467px;font-size:20px;color:#111">MS-WORD</div>
<div class="t" style="left:847px;top:467px;font-size:20px;color:#111;letter-spacing:-1.6px">EXCEL</div>
<div class="t" style="left:520px;top:350px;font-size:28px;font-weight:bold;color:#000;letter-spacing:1.45px">Quick Styles</div>

<!-- STATUS BAR -->
<div class="a" style="left:2px;top:985px;width:1536px;height:33px;background:#F3F3F3;border-top:1px solid #D6D6D6"></div>
<div class="t" style="left:13px;top:994px;font-size:15px;color:#333">Slide 1 of 1</div>
<svg style="left:115px;top:990px" width="28" height="26" viewBox="0 0 28 26">
 <path d="M4,3.5 L10.5,3.5 Q13.5,3.5 13.5,6.5 L13.5,14 M4,3.5 L4,20.5 L12.5,20.5 M13.5,6.5 Q13.5,3.5 16.5,3.5 L23.5,3.5 L23.5,13" fill="none" stroke="#333" stroke-width="1.5" stroke-linejoin="round"/>
 <path d="M14,15.5 L17.5,20.5 L24.5,13.5" fill="none" stroke="#333" stroke-width="1.5"/>
</svg>
<div class="t" style="left:165px;top:994px;font-size:15px;color:#333">English (United States)</div>
<svg style="left:340px;top:988px" width="26" height="28" viewBox="0 0 26 28">
 <circle cx="11.3" cy="5.5" r="2.6" fill="none" stroke="#333" stroke-width="1.4"/>
 <path d="M3,5 Q5,9 8.5,9.5 L14,9.5 Q18,9 20,5 M8.5,9.5 Q8,14 9,16 Q6,20 8,23.5 M14,9.5 Q14,12 13.5,14" fill="none" stroke="#333" stroke-width="1.4" stroke-linecap="round"/>
 <path d="M12.5,18 L15.5,22 L21.5,15.5" fill="none" stroke="#333" stroke-width="1.5"/>
</svg>
<div class="t" style="left:369px;top:994px;font-size:15px;color:#333">Accessibility: Good to go</div>
<div class="a" style="left:989px;top:986px;width:60px;height:32px;background:#DADADA"></div>
<svg style="left:1008px;top:992px" width="22" height="20" viewBox="0 0 22 20">
 <path d="M1.5 1.5 L20.5 1.5 L20.5 18.5 L1.5 18.5 Z M5.5 1.5 L5.5 15 L20.5 15" fill="none" stroke="#333" stroke-width="1.5"/>
 <rect x="9" y="5.5" width="7" height="4.5" fill="none" stroke="#333" stroke-width="1.4"/>
</svg>
<svg style="left:1067px;top:992px" width="24" height="20" viewBox="0 0 24 20">
 <rect x="1.5" y="1.5" width="8" height="7" rx="1" fill="none" stroke="#333" stroke-width="1.5"/>
 <rect x="14" y="1.5" width="8" height="7" rx="1" fill="none" stroke="#333" stroke-width="1.5"/>
 <rect x="1.5" y="11.5" width="8" height="7" rx="1" fill="none" stroke="#333" stroke-width="1.5"/>
 <rect x="14" y="11.5" width="8" height="7" rx="1" fill="none" stroke="#333" stroke-width="1.5"/>
</svg>
<svg style="left:1128px;top:992px" width="22" height="20" viewBox="0 0 22 20">
 <path d="M1.5 1.5 L9 1.5 Q11 2 11 4 Q11 2 13 1.5 L20.5 1.5 L20.5 17.5 L13 17.5 L11 19 L9 17.5 L1.5 17.5 Z M11 4 L11 19" fill="none" stroke="#333" stroke-width="1.4"/>
 <path d="M4 6H8.5M4 9H8.5M4 12H8.5M4 15H8.5M13.5 6H18M13.5 9H18M13.5 12H18M13.5 15H18" stroke="#333" stroke-width="1.2"/>
</svg>
<svg style="left:1187px;top:991px" width="22" height="22" viewBox="0 0 22 22">
 <path d="M1 2 L21 2 M3 2 L3 12 L19 12 L19 2 M11 12 L11 20 M6 20.5 L16 20.5" fill="none" stroke="#333" stroke-width="1.5"/>
 <path d="M7 6 L15 6" stroke="#333" stroke-width="1.5"/>
</svg>
<div class="a" style="left:1237px;top:1001px;width:12px;height:1.3px;background:#555"></div>
<div class="a" style="left:1257px;top:1001px;width:148px;height:2px;background:#6A6A6A"></div>
<div class="a" style="left:1295px;top:993px;width:8px;height:17px;background:#6A6A6A;border-radius:1px"></div>
<div class="a" style="left:1330px;top:996px;width:1.5px;height:11px;background:#6A6A6A"></div>
<svg style="left:1411px;top:994px" width="14" height="14" viewBox="0 0 14 14"><path d="M7 1V13M1 7H13" stroke="#333" stroke-width="1.3"/></svg>
<div class="t" style="left:1442px;top:994px;font-size:15px;color:#333">59%</div>
<svg style="left:1491px;top:989px" width="24" height="24" viewBox="0 0 24 24">
 <rect x="7.5" y="7.5" width="9" height="9" fill="none" stroke="#333" stroke-width="1.6"/>
 <path d="M9 4 L12 1.5 L15 4 M9 20 L12 22.5 L15 20 M4 9 L1.5 12 L4 15 M20 9 L22.5 12 L20 15" fill="none" stroke="#333" stroke-width="1.6"/>
</svg>
<!-- POPUP_START -->
<div class="a" style="left:929px;top:237px;width:430px;height:404px;background:#fff;border:4px solid #000;border-radius:6px"></div>
<div class="a" style="left:933px;top:590px;width:421px;height:1px;background:#E1E1E1"></div>
<svg style="left:950px;top:600px" width="26" height="26" viewBox="0 0 26 26">
 <path d="M1.5 21 L8 1.5 L14.5 21 M3.8 14 L12.2 14" fill="none" stroke="#333" stroke-width="1.3"/>
 <path d="M10 18 L17.5 10.5 L24 17 L16.5 24.5 Z" fill="#fff" stroke="#9B3DBF" stroke-width="1.5" stroke-linejoin="round"/>
 <path d="M10 18 L13.5 14.5 L20 21 L16.5 24.5 Z" fill="#D59DE6" stroke="#9B3DBF" stroke-width="1.5" stroke-linejoin="round"/>
</svg>
<div class="t" style="left:988px;top:605px;font-size:18px;color:#262626"><span style="text-decoration:underline">C</span>lear WordArt</div>
<svg style="left:0;top:0" width="1540" height="1020" viewBox="0 0 1540 1020">
<defs>
 <path id="ar" d="M0,43.5 L14.5,0 L22.5,0 L37,43.5 L31.3,43.5 L27.6,32.1 L9.4,32.1 L5.7,43.5 Z M11.3,26.8 L25.7,26.8 L18.5,6 Z"/>
 <path id="am" d="M0,41 L13.6,0 L23.4,0 L37,41 L31,41 L27.8,30.7 L9.2,30.7 L6,41 Z M11,26.1 L26,26.1 L18.5,6 Z"/>
 <path id="ab" d="M0,43 L13.5,0 L25.9,0 L39.4,43 L30.5,43 L27.9,33 L11.5,33 L8.9,43 Z M13.9,26.7 L25.6,26.7 L19.7,9.2 Z"/>
 <filter id="sh" x="-30%" y="-30%" width="160%" height="160%"><feGaussianBlur in="SourceAlpha" stdDeviation="1"/><feOffset dx="1" dy="1.5"/><feComponentTransfer><feFuncA type="linear" slope="0.4"/></feComponentTransfer><feMerge><feMergeNode/><feMergeNode in="SourceGraphic"/></feMerge></filter>
 <filter id="glow" x="-30%" y="-30%" width="160%" height="160%"><feGaussianBlur in="SourceGraphic" stdDeviation="0.7"/></filter>
 <linearGradient id="gGold" x1="0" y1="0" x2="1" y2="0"><stop offset="0" stop-color="#E8A800"/><stop offset="0.45" stop-color="#FFC800"/><stop offset="1" stop-color="#D09800"/></linearGradient>
 <linearGradient id="gGray" x1="0" y1="0" x2="0" y2="1"><stop offset="0" stop-color="#5a5e64"/><stop offset="1" stop-color="#B4B6BA"/></linearGradient>
 <linearGradient id="gBlue" x1="0" y1="0" x2="0" y2="1"><stop offset="0" stop-color="#3A6FA8"/><stop offset="0.5" stop-color="#5B9BD5"/><stop offset="1" stop-color="#80B2E2"/></linearGradient>
 <linearGradient id="gRefl" x1="0" y1="1" x2="0" y2="0"><stop offset="0" stop-color="#8DBBE6" stop-opacity="1"/><stop offset="1" stop-color="#FFFFFF" stop-opacity="0.1"/></linearGradient>
 <linearGradient id="gYel" x1="0" y1="0" x2="0" y2="1"><stop offset="0" stop-color="#FFE38A"/><stop offset="1" stop-color="#FFF0C8"/></linearGradient>
 <linearGradient id="gSil" x1="0" y1="0" x2="1" y2="0"><stop offset="0" stop-color="#8A8A8A"/><stop offset="0.3" stop-color="#E2E2E2"/><stop offset="1" stop-color="#E8E8E8"/></linearGradient>
 <pattern id="pDiag" width="4.2" height="4.2" patternUnits="userSpaceOnUse" patternTransform="rotate(-45)"><rect width="4.2" height="4.2" fill="#8C8C8C"/><rect width="4.2" height="2" fill="#333"/></pattern>
 <pattern id="pHor" width="4" height="3" patternUnits="userSpaceOnUse"><rect width="4" height="3" fill="#E8E8E8"/><rect width="4" height="1.2" fill="#A0A0A0"/></pattern>
 <pattern id="pDot" width="3" height="3" patternUnits="userSpaceOnUse"><rect width="3" height="3" fill="#fff"/><rect width="1.5" height="1.5" fill="#4472C4"/><rect x="1.5" y="1.5" width="1.5" height="1.5" fill="#4472C4"/></pattern>
 <pattern id="pLB" width="5" height="5" patternUnits="userSpaceOnUse" patternTransform="rotate(45)"><rect width="5" height="5" fill="#fff"/><rect width="1.3" height="5" fill="#9DC3E6"/></pattern>
 <pattern id="pNavy" width="5" height="5" patternUnits="userSpaceOnUse" patternTransform="rotate(-45)"><rect width="5" height="5" fill="#2F3F55"/><rect width="5" height="2" fill="#C8D3E0"/></pattern>
 <clipPath id="reflClip"><rect x="-5" y="44" width="50" height="13"/></clipPath>
</defs>
<g transform="translate(954.8,263)"><use href="#ar" fill="#000" fill-rule="evenodd" filter="url(#sh)"/></g>
<g transform="translate(1039.0,263)"><use href="#ar" fill="#4472C4" fill-rule="evenodd" filter="url(#sh)"/></g>
<g transform="translate(1123.2,263)"><g transform="translate(-1.2,0.3)"><use href="#ab" fill="#F8CBAD" stroke="#ED7D31" stroke-width="3" stroke-linejoin="round" fill-rule="evenodd"/></g></g>
<g transform="translate(1207.4,263)"><g transform="translate(-1.2,0.3)"><use href="#ab" fill="#fff" stroke="#5B9BD5" stroke-width="1.7" stroke-linejoin="round" fill-rule="evenodd" filter="url(#sh)"/></g></g>
<g transform="translate(1291.6,263)"><use href="#ar" fill="url(#gGold)" fill-rule="evenodd"/><path d="M14.8,0.5 L0.8,43" stroke="#FFE070" stroke-width="1.6"/><path d="M9.8,31.6 L27.2,31.6" stroke="#C89200" stroke-width="1"/></g>
<g transform="translate(955.9,346.6)"><use href="#am" fill="url(#gGray)" fill-rule="evenodd"/></g>
<g transform="translate(1040.1,346.6)"><use href="#ar" fill="url(#gBlue)" fill-rule="evenodd"/><g clip-path="url(#reflClip)"><use href="#ar" transform="translate(0,87) scale(1,-1)" fill="url(#gRefl)" fill-rule="evenodd"/></g></g>
<g transform="translate(1124.3,346.6)"><g transform="translate(-1.2,0)"><use href="#ab" fill="url(#gYel)" stroke="#FFC000" stroke-width="1.8" stroke-linejoin="round" fill-rule="evenodd"/></g></g>
<g transform="translate(1208.5,346.6)"><g transform="translate(-1.2,0)"><use href="#ab" fill="none" stroke="#4472C4" stroke-width="2.8" stroke-linejoin="round" opacity="0.5" filter="url(#glow)"/><use href="#ab" fill="#fff" stroke="#4472C4" stroke-width="1.6" stroke-linejoin="round" fill-rule="evenodd"/></g></g>
<g transform="translate(1292.7,346.6)"><use href="#ar" fill="#8C8C8C" fill-rule="evenodd"/><path d="M14.5,0.5 L1,43 M22.5,0.5 L36,43" stroke="#B4B4B4" stroke-width="2.6"/><path d="M18.5,3 L10.5,29 M18.5,3 L26.5,29" stroke="#656565" stroke-width="2.4"/></g>
<g transform="translate(955.7,432.3)"><use href="#am" transform="translate(3.8,3.8)" fill="#8A8A8A" fill-rule="evenodd"/><use href="#am" fill="#000" stroke="#fff" stroke-width="2.8" stroke-linejoin="round" paint-order="stroke" fill-rule="evenodd"/></g>
<g transform="translate(1039.9,432.3)"><use href="#am" transform="translate(3.8,3.8)" fill="#5B9BD5" fill-rule="evenodd"/><use href="#am" fill="#262626" stroke="#fff" stroke-width="2.8" stroke-linejoin="round" paint-order="stroke" fill-rule="evenodd"/></g>
<g transform="translate(1124.1,432.3)"><use href="#am" transform="translate(3.8,3.8)" fill="#A9CBEB" fill-rule="evenodd"/><use href="#am" fill="#5B9BD5" stroke="#fff" stroke-width="2.8" stroke-linejoin="round" paint-order="stroke" fill-rule="evenodd"/></g>
<g transform="translate(1208.3,432.3)"><use href="#am" transform="translate(2.2,2.2)" fill="#ED7D31" stroke="#ED7D31" stroke-width="1" fill-rule="evenodd"/><use href="#am" fill="#fff" stroke="#ED7D31" stroke-width="1" stroke-linejoin="round" fill-rule="evenodd"/></g>
<g transform="translate(1292.5,432.3)"><use href="#am" transform="translate(-0.8,0.8)" fill="#8A8A8A" fill-rule="evenodd" filter="url(#glow)"/><use href="#am" fill="url(#gSil)" fill-rule="evenodd"/></g>
<g transform="translate(954.3,515)"><use href="#ab" fill="url(#pDiag)" fill-rule="evenodd" filter="url(#sh)"/></g>
<g transform="translate(1038.5,515)"><use href="#ab" fill="url(#pHor)" stroke="#555" stroke-width="2" stroke-linejoin="round" fill-rule="evenodd"/></g>
<g transform="translate(1122.7,515)"><use href="#ab" transform="translate(1.5,1.5)" fill="#4472C4" fill-rule="evenodd"/><use href="#ab" fill="url(#pDot)" stroke="#4472C4" stroke-width="1.6" stroke-linejoin="round" fill-rule="evenodd"/></g>
<g transform="translate(1206.9,515)"><use href="#ab" fill="url(#pLB)" stroke="#5B9BD5" stroke-width="2" stroke-linejoin="round" fill-rule="evenodd"/></g>
<g transform="translate(1291.1,515)"><use href="#ab" transform="translate(1.5,1.5)" fill="#2F3F55" fill-rule="evenodd"/><use href="#ab" fill="url(#pNavy)" stroke="#2F3F55" stroke-width="1.6" stroke-linejoin="round" fill-rule="evenodd"/></g>
</svg>
<!-- POPUP_END -->
</body></html>
